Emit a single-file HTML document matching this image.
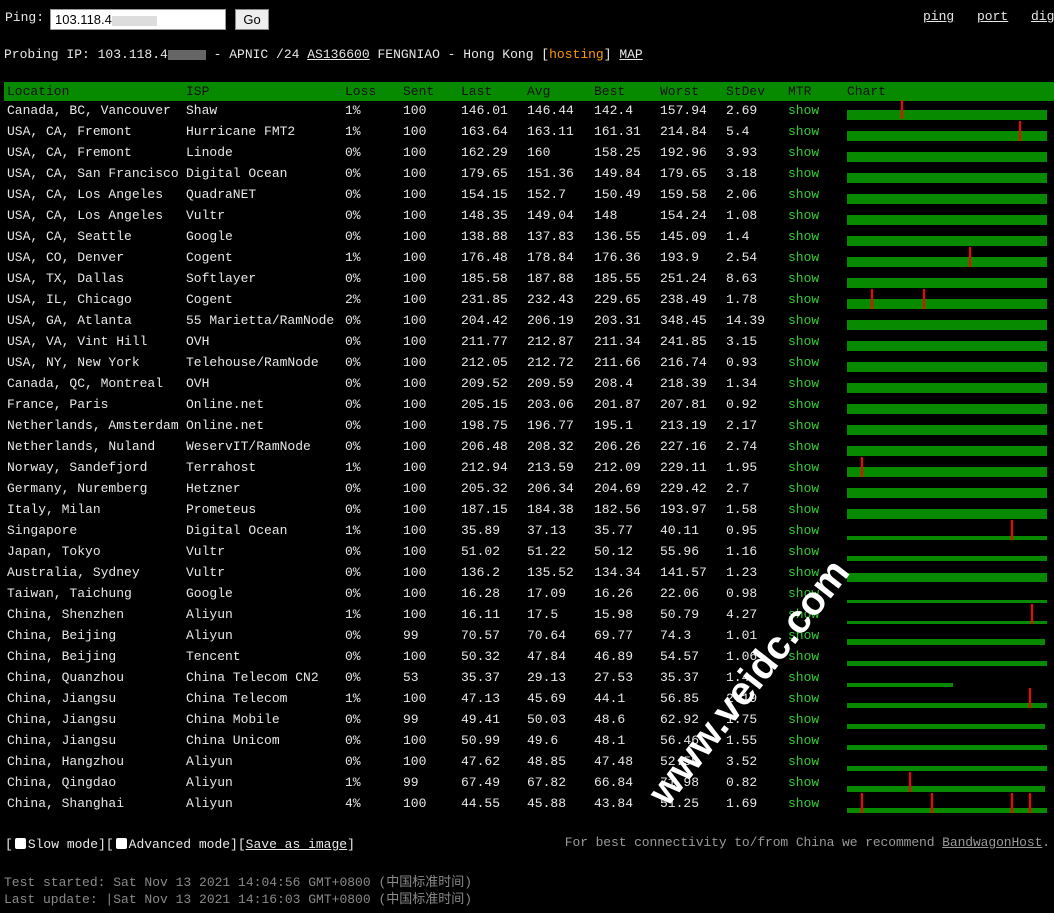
<!DOCTYPE html>
<html><head><meta charset="utf-8"><style>
body{margin:0;background:#000;width:1054px;height:913px;overflow:hidden;position:relative;font-family:"Liberation Mono","Noto Sans CJK SC",monospace;font-size:13px;color:#e8e8e8}
.a{position:absolute;white-space:nowrap}
u{text-decoration:underline}
.hd{position:absolute;left:4px;top:82px;width:1050px;height:19px;background:#088a00}
.r{position:absolute;left:0;width:1054px;height:21px;line-height:21px}
.r span,.h span{position:absolute;white-space:nowrap}
.h{position:absolute;left:0;top:82px;height:19px;line-height:19px;color:#111;width:1054px}
.c1{left:7px}.c2{left:186px}.c3{left:345px}.c4{left:403px}.c5{left:461px}.c6{left:527px}.c7{left:594px}.c8{left:660px}.c9{left:726px}.c10{left:788px}.c11{left:847px}
.s{color:#33cc33}
.bar{position:absolute;left:847px;background:#088a00}
.sp{position:absolute;width:2px;background:#f00}
</style></head><body>
<div class="a" style="left:5px;top:10px">Ping:</div>
<div class="a" style="left:50px;top:9px;width:176px;height:21px;background:#fff;border:1px solid #999;box-sizing:border-box;color:#000;font-family:'Liberation Sans',sans-serif;font-size:13px;line-height:19px;padding-left:4px">103.118.4<span style="display:inline-block;width:45px;height:10px;background:#ddd;vertical-align:middle"></span></div>
<div class="a" style="left:235px;top:9px;width:34px;height:21px;background:#eee;border:1px solid #888;box-sizing:border-box;color:#000;font-family:'Liberation Sans',sans-serif;text-align:center;line-height:19px">Go</div>
<div class="a" style="left:923px;top:9px"><u>ping</u></div>
<div class="a" style="left:977px;top:9px"><u>port</u></div>
<div class="a" style="left:1031px;top:9px"><u>dig</u></div>
<div class="a" style="left:4px;top:47px">Probing IP: 103.118.4<span style="display:inline-block;width:38px;height:10px;background:#666;vertical-align:middle"></span> - APNIC /24 <u>AS136600</u> FENGNIAO - Hong Kong [<span style="color:#f90">hosting</span>] <u>MAP</u></div>
<div class="hd"></div>
<div class="h"><span class="c1">Location</span><span class="c2">ISP</span><span class="c3">Loss</span><span class="c4">Sent</span><span class="c5">Last</span><span class="c6">Avg</span><span class="c7">Best</span><span class="c8">Worst</span><span class="c9">StDev</span><span class="c10">MTR</span><span class="c11">Chart</span></div>

<div class="r" style="top:100px"><span class="c1">Canada, BC, Vancouver</span><span class="c2">Shaw</span><span class="c3">1%</span><span class="c4">100</span><span class="c5">146.01</span><span class="c6">146.44</span><span class="c7">142.4</span><span class="c8">157.94</span><span class="c9">2.69</span><span class="c10 s">show</span></div>
<div class="r" style="top:121px"><span class="c1">USA, CA, Fremont</span><span class="c2">Hurricane FMT2</span><span class="c3">1%</span><span class="c4">100</span><span class="c5">163.64</span><span class="c6">163.11</span><span class="c7">161.31</span><span class="c8">214.84</span><span class="c9">5.4</span><span class="c10 s">show</span></div>
<div class="r" style="top:142px"><span class="c1">USA, CA, Fremont</span><span class="c2">Linode</span><span class="c3">0%</span><span class="c4">100</span><span class="c5">162.29</span><span class="c6">160</span><span class="c7">158.25</span><span class="c8">192.96</span><span class="c9">3.93</span><span class="c10 s">show</span></div>
<div class="r" style="top:163px"><span class="c1">USA, CA, San Francisco</span><span class="c2">Digital Ocean</span><span class="c3">0%</span><span class="c4">100</span><span class="c5">179.65</span><span class="c6">151.36</span><span class="c7">149.84</span><span class="c8">179.65</span><span class="c9">3.18</span><span class="c10 s">show</span></div>
<div class="r" style="top:184px"><span class="c1">USA, CA, Los Angeles</span><span class="c2">QuadraNET</span><span class="c3">0%</span><span class="c4">100</span><span class="c5">154.15</span><span class="c6">152.7</span><span class="c7">150.49</span><span class="c8">159.58</span><span class="c9">2.06</span><span class="c10 s">show</span></div>
<div class="r" style="top:205px"><span class="c1">USA, CA, Los Angeles</span><span class="c2">Vultr</span><span class="c3">0%</span><span class="c4">100</span><span class="c5">148.35</span><span class="c6">149.04</span><span class="c7">148</span><span class="c8">154.24</span><span class="c9">1.08</span><span class="c10 s">show</span></div>
<div class="r" style="top:226px"><span class="c1">USA, CA, Seattle</span><span class="c2">Google</span><span class="c3">0%</span><span class="c4">100</span><span class="c5">138.88</span><span class="c6">137.83</span><span class="c7">136.55</span><span class="c8">145.09</span><span class="c9">1.4</span><span class="c10 s">show</span></div>
<div class="r" style="top:247px"><span class="c1">USA, CO, Denver</span><span class="c2">Cogent</span><span class="c3">1%</span><span class="c4">100</span><span class="c5">176.48</span><span class="c6">178.84</span><span class="c7">176.36</span><span class="c8">193.9</span><span class="c9">2.54</span><span class="c10 s">show</span></div>
<div class="r" style="top:268px"><span class="c1">USA, TX, Dallas</span><span class="c2">Softlayer</span><span class="c3">0%</span><span class="c4">100</span><span class="c5">185.58</span><span class="c6">187.88</span><span class="c7">185.55</span><span class="c8">251.24</span><span class="c9">8.63</span><span class="c10 s">show</span></div>
<div class="r" style="top:289px"><span class="c1">USA, IL, Chicago</span><span class="c2">Cogent</span><span class="c3">2%</span><span class="c4">100</span><span class="c5">231.85</span><span class="c6">232.43</span><span class="c7">229.65</span><span class="c8">238.49</span><span class="c9">1.78</span><span class="c10 s">show</span></div>
<div class="r" style="top:310px"><span class="c1">USA, GA, Atlanta</span><span class="c2">55 Marietta/RamNode</span><span class="c3">0%</span><span class="c4">100</span><span class="c5">204.42</span><span class="c6">206.19</span><span class="c7">203.31</span><span class="c8">348.45</span><span class="c9">14.39</span><span class="c10 s">show</span></div>
<div class="r" style="top:331px"><span class="c1">USA, VA, Vint Hill</span><span class="c2">OVH</span><span class="c3">0%</span><span class="c4">100</span><span class="c5">211.77</span><span class="c6">212.87</span><span class="c7">211.34</span><span class="c8">241.85</span><span class="c9">3.15</span><span class="c10 s">show</span></div>
<div class="r" style="top:352px"><span class="c1">USA, NY, New York</span><span class="c2">Telehouse/RamNode</span><span class="c3">0%</span><span class="c4">100</span><span class="c5">212.05</span><span class="c6">212.72</span><span class="c7">211.66</span><span class="c8">216.74</span><span class="c9">0.93</span><span class="c10 s">show</span></div>
<div class="r" style="top:373px"><span class="c1">Canada, QC, Montreal</span><span class="c2">OVH</span><span class="c3">0%</span><span class="c4">100</span><span class="c5">209.52</span><span class="c6">209.59</span><span class="c7">208.4</span><span class="c8">218.39</span><span class="c9">1.34</span><span class="c10 s">show</span></div>
<div class="r" style="top:394px"><span class="c1">France, Paris</span><span class="c2">Online.net</span><span class="c3">0%</span><span class="c4">100</span><span class="c5">205.15</span><span class="c6">203.06</span><span class="c7">201.87</span><span class="c8">207.81</span><span class="c9">0.92</span><span class="c10 s">show</span></div>
<div class="r" style="top:415px"><span class="c1">Netherlands, Amsterdam</span><span class="c2">Online.net</span><span class="c3">0%</span><span class="c4">100</span><span class="c5">198.75</span><span class="c6">196.77</span><span class="c7">195.1</span><span class="c8">213.19</span><span class="c9">2.17</span><span class="c10 s">show</span></div>
<div class="r" style="top:436px"><span class="c1">Netherlands, Nuland</span><span class="c2">WeservIT/RamNode</span><span class="c3">0%</span><span class="c4">100</span><span class="c5">206.48</span><span class="c6">208.32</span><span class="c7">206.26</span><span class="c8">227.16</span><span class="c9">2.74</span><span class="c10 s">show</span></div>
<div class="r" style="top:457px"><span class="c1">Norway, Sandefjord</span><span class="c2">Terrahost</span><span class="c3">1%</span><span class="c4">100</span><span class="c5">212.94</span><span class="c6">213.59</span><span class="c7">212.09</span><span class="c8">229.11</span><span class="c9">1.95</span><span class="c10 s">show</span></div>
<div class="r" style="top:478px"><span class="c1">Germany, Nuremberg</span><span class="c2">Hetzner</span><span class="c3">0%</span><span class="c4">100</span><span class="c5">205.32</span><span class="c6">206.34</span><span class="c7">204.69</span><span class="c8">229.42</span><span class="c9">2.7</span><span class="c10 s">show</span></div>
<div class="r" style="top:499px"><span class="c1">Italy, Milan</span><span class="c2">Prometeus</span><span class="c3">0%</span><span class="c4">100</span><span class="c5">187.15</span><span class="c6">184.38</span><span class="c7">182.56</span><span class="c8">193.97</span><span class="c9">1.58</span><span class="c10 s">show</span></div>
<div class="r" style="top:520px"><span class="c1">Singapore</span><span class="c2">Digital Ocean</span><span class="c3">1%</span><span class="c4">100</span><span class="c5">35.89</span><span class="c6">37.13</span><span class="c7">35.77</span><span class="c8">40.11</span><span class="c9">0.95</span><span class="c10 s">show</span></div>
<div class="r" style="top:541px"><span class="c1">Japan, Tokyo</span><span class="c2">Vultr</span><span class="c3">0%</span><span class="c4">100</span><span class="c5">51.02</span><span class="c6">51.22</span><span class="c7">50.12</span><span class="c8">55.96</span><span class="c9">1.16</span><span class="c10 s">show</span></div>
<div class="r" style="top:562px"><span class="c1">Australia, Sydney</span><span class="c2">Vultr</span><span class="c3">0%</span><span class="c4">100</span><span class="c5">136.2</span><span class="c6">135.52</span><span class="c7">134.34</span><span class="c8">141.57</span><span class="c9">1.23</span><span class="c10 s">show</span></div>
<div class="r" style="top:583px"><span class="c1">Taiwan, Taichung</span><span class="c2">Google</span><span class="c3">0%</span><span class="c4">100</span><span class="c5">16.28</span><span class="c6">17.09</span><span class="c7">16.26</span><span class="c8">22.06</span><span class="c9">0.98</span><span class="c10 s">show</span></div>
<div class="r" style="top:604px"><span class="c1">China, Shenzhen</span><span class="c2">Aliyun</span><span class="c3">1%</span><span class="c4">100</span><span class="c5">16.11</span><span class="c6">17.5</span><span class="c7">15.98</span><span class="c8">50.79</span><span class="c9">4.27</span><span class="c10 s">show</span></div>
<div class="r" style="top:625px"><span class="c1">China, Beijing</span><span class="c2">Aliyun</span><span class="c3">0%</span><span class="c4">99</span><span class="c5">70.57</span><span class="c6">70.64</span><span class="c7">69.77</span><span class="c8">74.3</span><span class="c9">1.01</span><span class="c10 s">show</span></div>
<div class="r" style="top:646px"><span class="c1">China, Beijing</span><span class="c2">Tencent</span><span class="c3">0%</span><span class="c4">100</span><span class="c5">50.32</span><span class="c6">47.84</span><span class="c7">46.89</span><span class="c8">54.57</span><span class="c9">1.06</span><span class="c10 s">show</span></div>
<div class="r" style="top:667px"><span class="c1">China, Quanzhou</span><span class="c2">China Telecom CN2</span><span class="c3">0%</span><span class="c4">53</span><span class="c5">35.37</span><span class="c6">29.13</span><span class="c7">27.53</span><span class="c8">35.37</span><span class="c9">1.4</span><span class="c10 s">show</span></div>
<div class="r" style="top:688px"><span class="c1">China, Jiangsu</span><span class="c2">China Telecom</span><span class="c3">1%</span><span class="c4">100</span><span class="c5">47.13</span><span class="c6">45.69</span><span class="c7">44.1</span><span class="c8">56.85</span><span class="c9">2.19</span><span class="c10 s">show</span></div>
<div class="r" style="top:709px"><span class="c1">China, Jiangsu</span><span class="c2">China Mobile</span><span class="c3">0%</span><span class="c4">99</span><span class="c5">49.41</span><span class="c6">50.03</span><span class="c7">48.6</span><span class="c8">62.92</span><span class="c9">1.75</span><span class="c10 s">show</span></div>
<div class="r" style="top:730px"><span class="c1">China, Jiangsu</span><span class="c2">China Unicom</span><span class="c3">0%</span><span class="c4">100</span><span class="c5">50.99</span><span class="c6">49.6</span><span class="c7">48.1</span><span class="c8">56.46</span><span class="c9">1.55</span><span class="c10 s">show</span></div>
<div class="r" style="top:751px"><span class="c1">China, Hangzhou</span><span class="c2">Aliyun</span><span class="c3">0%</span><span class="c4">100</span><span class="c5">47.62</span><span class="c6">48.85</span><span class="c7">47.48</span><span class="c8">52.59</span><span class="c9">3.52</span><span class="c10 s">show</span></div>
<div class="r" style="top:772px"><span class="c1">China, Qingdao</span><span class="c2">Aliyun</span><span class="c3">1%</span><span class="c4">99</span><span class="c5">67.49</span><span class="c6">67.82</span><span class="c7">66.84</span><span class="c8">71.98</span><span class="c9">0.82</span><span class="c10 s">show</span></div>
<div class="r" style="top:793px"><span class="c1">China, Shanghai</span><span class="c2">Aliyun</span><span class="c3">4%</span><span class="c4">100</span><span class="c5">44.55</span><span class="c6">45.88</span><span class="c7">43.84</span><span class="c8">51.25</span><span class="c9">1.69</span><span class="c10 s">show</span></div>

<div class="bar" style="top:110px;height:10px;width:200px"></div>
<div class="bar" style="top:131px;height:10px;width:200px"></div>
<div class="bar" style="top:152px;height:10px;width:200px"></div>
<div class="bar" style="top:173px;height:10px;width:200px"></div>
<div class="bar" style="top:194px;height:10px;width:200px"></div>
<div class="bar" style="top:215px;height:10px;width:200px"></div>
<div class="bar" style="top:236px;height:10px;width:200px"></div>
<div class="bar" style="top:257px;height:10px;width:200px"></div>
<div class="bar" style="top:278px;height:10px;width:200px"></div>
<div class="bar" style="top:299px;height:10px;width:200px"></div>
<div class="bar" style="top:320px;height:10px;width:200px"></div>
<div class="bar" style="top:341px;height:10px;width:200px"></div>
<div class="bar" style="top:362px;height:10px;width:200px"></div>
<div class="bar" style="top:383px;height:10px;width:200px"></div>
<div class="bar" style="top:404px;height:10px;width:200px"></div>
<div class="bar" style="top:425px;height:10px;width:200px"></div>
<div class="bar" style="top:446px;height:10px;width:200px"></div>
<div class="bar" style="top:467px;height:10px;width:200px"></div>
<div class="bar" style="top:488px;height:10px;width:200px"></div>
<div class="bar" style="top:509px;height:10px;width:200px"></div>
<div class="bar" style="top:536px;height:4px;width:200px"></div>
<div class="bar" style="top:556px;height:5px;width:200px"></div>
<div class="bar" style="top:573px;height:9px;width:200px"></div>
<div class="bar" style="top:600px;height:3px;width:200px"></div>
<div class="bar" style="top:621px;height:3px;width:200px"></div>
<div class="bar" style="top:639px;height:6px;width:198px"></div>
<div class="bar" style="top:661px;height:5px;width:200px"></div>
<div class="bar" style="top:683px;height:4px;width:106px"></div>
<div class="bar" style="top:703px;height:5px;width:200px"></div>
<div class="bar" style="top:724px;height:5px;width:198px"></div>
<div class="bar" style="top:745px;height:5px;width:200px"></div>
<div class="bar" style="top:766px;height:5px;width:200px"></div>
<div class="bar" style="top:786px;height:6px;width:198px"></div>
<div class="bar" style="top:808px;height:5px;width:200px"></div>
<div class="sp" style="left:901px;top:100px;height:19px"></div>
<div class="sp" style="left:1019px;top:121px;height:20px"></div>
<div class="sp" style="left:969px;top:247px;height:20px"></div>
<div class="sp" style="left:871px;top:289px;height:20px"></div>
<div class="sp" style="left:923px;top:289px;height:20px"></div>
<div class="sp" style="left:861px;top:457px;height:20px"></div>
<div class="sp" style="left:1011px;top:520px;height:20px"></div>
<div class="sp" style="left:1031px;top:604px;height:20px"></div>
<div class="sp" style="left:1029px;top:688px;height:20px"></div>
<div class="sp" style="left:909px;top:772px;height:20px"></div>
<div class="sp" style="left:861px;top:793px;height:20px"></div>
<div class="sp" style="left:931px;top:793px;height:20px"></div>
<div class="sp" style="left:1011px;top:793px;height:20px"></div>
<div class="sp" style="left:1029px;top:793px;height:20px"></div>

<div class="a" style="transform:rotate(-52deg);transform-origin:center;font-family:'Liberation Sans',sans-serif;font-weight:bold;font-size:40px;color:#fff;left:600px;top:660px">www.veidc.com</div>

<div class="a" style="left:5px;top:837px">[<span style="display:inline-block;width:11px;height:11px;background:#fff;border-radius:2px;vertical-align:-1px;margin:0 2px"></span>Slow mode][<span style="display:inline-block;width:11px;height:11px;background:#fff;border-radius:2px;vertical-align:-1px;margin:0 2px"></span>Advanced mode][<u>Save as image</u>]</div>
<div class="a" style="right:4px;top:835px;color:#999;letter-spacing:-0.1px">For best connectivity to/from China we recommend <u>BandwagonHost</u>.</div>
<div class="a" style="left:4px;top:871px;color:#8a8a8a">Test started: Sat Nov 13 2021 14:04:56 GMT+0800 (中国标准时间)</div>
<div class="a" style="left:4px;top:888px;color:#8a8a8a">Last update: |Sat Nov 13 2021 14:16:03 GMT+0800 (中国标准时间)</div>
</body></html>
